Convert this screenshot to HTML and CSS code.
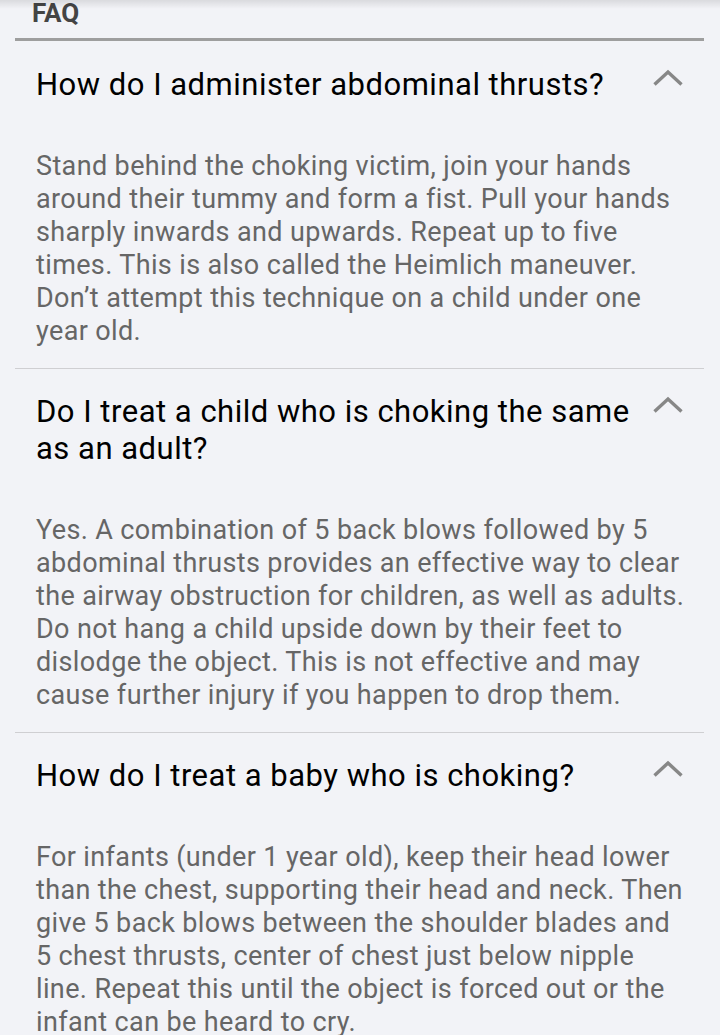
FILE: index.html
```html
<!DOCTYPE html>
<html>
<head>
<meta charset="utf-8">
<link rel="stylesheet" href="styles.css">
</head>
<body>
<div class="topshadow"></div>
<div class="page">
  <div class="header">FAQ</div>
  <div class="faq">
    <div class="item">
      <div class="qrow">
        <div class="question">How do I administer abdominal thrusts?</div>
        <svg class="chev" width="32" height="18" viewBox="0 0 32 18"><path d="M2.5 15.5 L16 3 L29.5 15.5" fill="none" stroke="#878787" stroke-width="3.4"/></svg>
      </div>
      <div class="answer">Stand behind the choking victim, join your hands around their tummy and form a fist. Pull your hands sharply inwards and upwards. Repeat up to five times. This is also called the Heimlich maneuver. Don’t attempt this technique on a child under one year old.</div>
    </div>
    <div class="item">
      <div class="qrow">
        <div class="question">Do I treat a child who is choking the same as an adult?</div>
        <svg class="chev" width="32" height="18" viewBox="0 0 32 18"><path d="M2.5 15.5 L16 3 L29.5 15.5" fill="none" stroke="#878787" stroke-width="3.4"/></svg>
      </div>
      <div class="answer">Yes. A combination of 5 back blows followed by 5 abdominal thrusts provides an effective way to clear the airway obstruction for children, as well as adults. Do not hang a child upside down by their feet to dislodge the object. This is not effective and may cause further injury if you happen to drop them.</div>
    </div>
    <div class="item">
      <div class="qrow">
        <div class="question">How do I treat a baby who is choking?</div>
        <svg class="chev" width="32" height="18" viewBox="0 0 32 18"><path d="M2.5 15.5 L16 3 L29.5 15.5" fill="none" stroke="#878787" stroke-width="3.4"/></svg>
      </div>
      <div class="answer">For infants (under 1 year old), keep their head lower than the chest, supporting their head and neck. Then give 5 back blows between the shoulder blades and 5 chest thrusts, center of chest just below nipple line. Repeat this until the object is forced out or the infant can be heard to cry.</div>
    </div>
  </div>
</div>
</body>
</html>
```
FILE: styles.css
```css
html, body {
  margin: 0;
  padding: 0;
  background: #f2f3f7;
}
body {
  font-family: Roboto, "Noto Sans", sans-serif;
  overflow: hidden;
  height: 1035px;
}
.topshadow {
  position: absolute;
  left: 0;
  top: 0;
  width: 720px;
  height: 9px;
  background: linear-gradient(to bottom, rgba(0,0,0,0.10), rgba(0,0,0,0));
}
.page {
  margin: 0 16px 0 15px;
}
.header {
  font-weight: bold;
  font-size: 26px;
  color: #444;
  line-height: 30px;
  margin-top: -2px;
  padding-left: 17px;
  padding-bottom: 10px;
  border-bottom: 3px solid #9e9e9e;
}
.item {
  border-bottom: 1px solid #cfcfd2;
  padding: 24px 16px 20px 21px;
}
.item:first-child {
  padding-top: 25px;
}
.qrow {
  display: flex;
  align-items: flex-start;
  justify-content: space-between;
}
.question {
  font-size: 31px;
  letter-spacing: 0.5px;
  line-height: 37px;
  color: #000;
  max-width: 602px;
}
.chev {
  flex: none;
  margin-top: 3px;
  margin-right: 4px;
}
.answer {
  margin-top: 47px;
  font-size: 27px;
  letter-spacing: 0.37px;
  line-height: 33px;
  color: #666;
}
```
